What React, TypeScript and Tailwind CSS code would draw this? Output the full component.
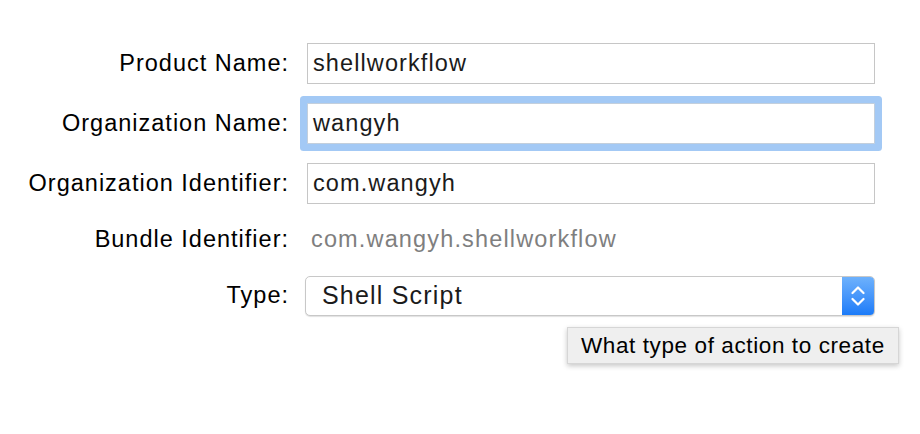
import type { ReactNode } from 'react'

function Row({ label, children, className = '' }: { label: string; children: ReactNode; className?: string }) {
  return (
    <div className={`flex items-center ${className}`}>
      <div className="w-[289px] shrink-0 text-right text-[23.5px] tracking-[1px] text-black">{label}</div>
      <div className="ml-[18px] flex items-center">{children}</div>
    </div>
  )
}

function Field({ value, focused = false }: { value: string; focused?: boolean }) {
  return (
    <div
      className={`flex h-[41px] w-[568px] items-center border bg-white pl-[5px] text-[23.5px] tracking-[1.1px] text-[#1b1b1b] ${
        focused ? 'rounded-[1px] border-[#c3cfdc] shadow-[0_0_0_7px_#a3c9f5]' : 'border-[#c6c6c6]'
      }`}
    >
      {value}
    </div>
  )
}

export default function App() {
  return (
    <div className="relative h-[434px] w-[920px] overflow-hidden bg-white font-['Liberation_Sans',Arial,sans-serif]">
      <div className="flex flex-col pt-[43px]">
        <Row label="Product Name:" className="h-[41px]">
          <Field value="shellworkflow" />
        </Row>
        <Row label="Organization Name:" className="mt-[19px] h-[41px]">
          <Field value="wangyh" focused />
        </Row>
        <Row label="Organization Identifier:" className="mt-[19px] h-[41px]">
          <Field value="com.wangyh" />
        </Row>
        <Row label="Bundle Identifier:" className="mt-[15px] h-[41px]">
          <div className="pl-[4px] text-[23.5px] tracking-[1.15px] text-[#7f7f7f]">com.wangyh.shellworkflow</div>
        </Row>
        <Row label="Type:" className="mt-[16px] h-[40px]">
          <div className="-ml-[2px] flex h-[40px] w-[570px] items-stretch overflow-hidden rounded-[5px] border border-[#c8c8c8] bg-white shadow-[0_1px_1px_rgba(0,0,0,0.12)]">
            <div className="flex flex-1 items-center pl-[16px] text-[25px] tracking-[1.2px] text-[#1b1b1b]">
              Shell Script
            </div>
            <div className="flex w-[32px] items-center justify-center bg-gradient-to-b from-[#6db1fc] to-[#1a7bf8]">
              <svg width="14" height="22" viewBox="0 0 14 22" fill="none" stroke="white" strokeWidth="2.2" strokeLinecap="round" strokeLinejoin="round">
                <path d="M1.5 8 L7 2.5 L12.5 8" />
                <path d="M1.5 14 L7 19.5 L12.5 14" />
              </svg>
            </div>
          </div>
        </Row>
      </div>

      <div className="absolute left-[567px] top-[327px] flex h-[37px] w-[332px] items-center border border-[#d6d6d6] bg-[#efefef] pl-[13px] text-[22.5px] tracking-[0.6px] text-black shadow-[0_2px_5px_rgba(0,0,0,0.22)]">
        What type of action to create
      </div>
    </div>
  )
}
